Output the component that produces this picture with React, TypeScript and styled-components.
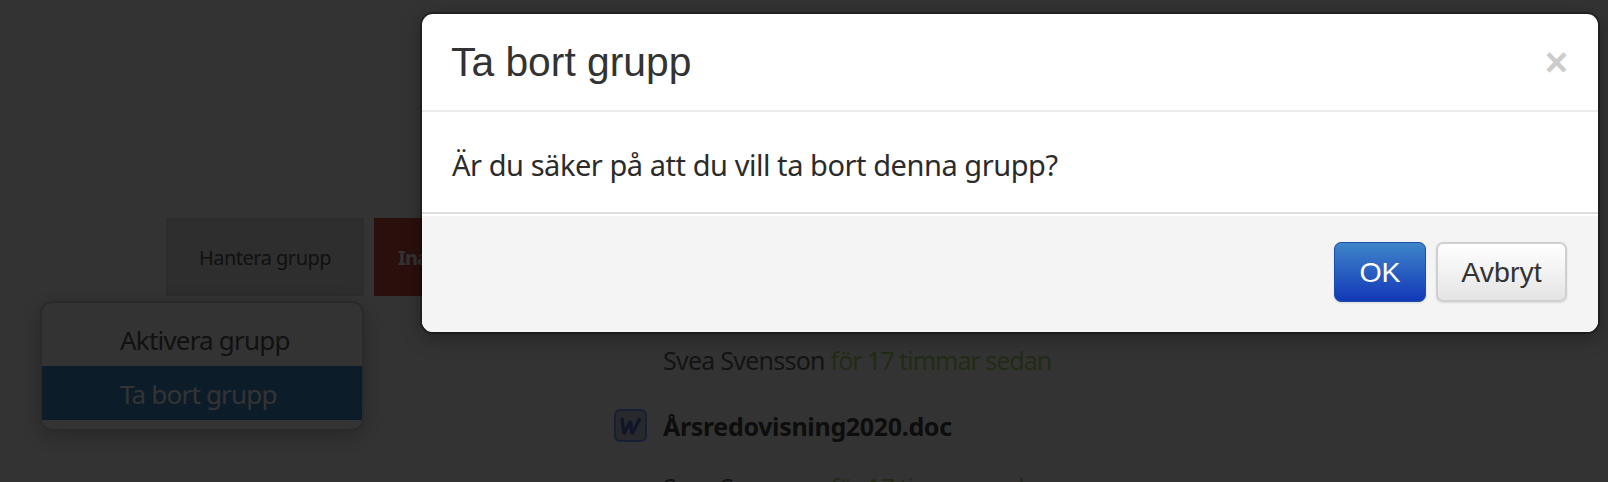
import React from 'react';
import styled, {createGlobalStyle} from 'styled-components';

const GlobalStyle = createGlobalStyle`
    html, body {
        margin: 0;
        padding: 0;
        background: #fff;
    }
`;

const sans = `"Noto Sans", "Open Sans", sans-serif`;
const helvetica = `"Liberation Sans", Arial, sans-serif`;

const WordIcon = () =>
    <svg width="33" height="33" viewBox="0 0 33 33">
        <rect x="1" y="1" width="31" height="31" rx="5" fill="#c4cee0" stroke="#6f9aff" strokeWidth="2" />
        <polyline points="8,9 10,25 16.5,12 18,25 26,9" fill="none" stroke="#4f6fc0" strokeWidth="3.4" strokeLinejoin="bevel" />
    </svg>;

export default function App() {
    return (
        <Page>
            <GlobalStyle />
            <Content>
                <LeftColumn>
                    <ActionRow>
                        <ManageButton>Hantera grupp</ManageButton>
                        <DangerButton>Inaktivera</DangerButton>
                    </ActionRow>
                    <DropMenu>
                        <MenuItem>Aktivera grupp</MenuItem>
                        <MenuItem $active>Ta bort grupp</MenuItem>
                    </DropMenu>
                </LeftColumn>
                <FileColumn>
                    <Uploader>Svea Svensson <Ago>för 17 timmar sedan</Ago></Uploader>
                    <FileRow>
                        <WordIcon />
                        <FileName>Årsredovisning2020.doc</FileName>
                    </FileRow>
                    <Uploader>Svea Svensson <Ago>för 17 timmar sedan</Ago></Uploader>
                </FileColumn>
            </Content>
            <Backdrop />
            <Modal>
                <ModalHeader>
                    <ModalTitle>Ta bort grupp</ModalTitle>
                    <Close>×</Close>
                </ModalHeader>
                <ModalBody>Är du säker på att du vill ta bort denna grupp?</ModalBody>
                <ModalFooter>
                    <PrimaryButton>OK</PrimaryButton>
                    <CancelButton>Avbryt</CancelButton>
                </ModalFooter>
            </Modal>
        </Page>
    );
}

const Page = styled.div`
    position: relative;
    width: 1608px;
    height: 482px;
    overflow: hidden;
    background: #fff;
    font-family: ${sans};
`;

const Content = styled.div`
    display: flex;
    height: 100%;
    padding-top: 218px;
    padding-left: 40px;
    box-sizing: border-box;
`;

const LeftColumn = styled.div`
    width: 526px;
    flex-shrink: 0;
    display: flex;
    flex-direction: column;
`;

const ActionRow = styled.div`
    display: flex;
    gap: 10px;
    margin-left: 126px;
    height: 78px;
`;

const ManageButton = styled.div`
    width: 198px;
    flex-shrink: 0;
    box-sizing: border-box;
    display: flex;
    align-items: center;
    justify-content: center;
    background: #e4e4e4;
    border: 2px solid #dcdcdc;
    color: #555;
    font-size: 20px;
    letter-spacing: -0.5px;
`;

const DangerButton = styled.div`
    width: 200px;
    flex-shrink: 0;
    display: flex;
    align-items: center;
    padding-left: 24px;
    box-sizing: border-box;
    background: #d24b41;
    color: #fff;
    font-size: 20px;
    font-weight: 700;
    letter-spacing: -0.8px;
`;

const DropMenu = styled.div`
    width: 324px;
    height: 130px;
    margin-top: 5px;
    box-sizing: border-box;
    padding-top: 9px;
    background: #fff;
    border: 2px solid #cfcfcf;
    border-radius: 12px;
    box-shadow: 0 6px 24px rgba(0, 0, 0, 0.25);
    overflow: hidden;
`;

const MenuItem = styled.div<{$active?: boolean}>`
    height: 54px;
    line-height: 56px;
    padding-left: 78px;
    font-size: 26px;
    letter-spacing: -0.8px;
    color: ${p => p.$active ? '#fff' : '#555'};
    background: ${p => p.$active ? '#3c8cc8' : 'transparent'};
`;

const FileColumn = styled.div`
    display: flex;
    flex-direction: column;
    padding-left: 48px;
    padding-top: 126px;
    font-size: 25px;
    color: #666;
`;

const Uploader = styled.div`
    height: 32px;
    line-height: 32px;
    margin-left: 49px;
    letter-spacing: -0.75px;
    white-space: nowrap;
`;

const Ago = styled.span`
    color: #a5d86a;
    letter-spacing: -1px;
`;

const FileRow = styled.div`
    display: flex;
    align-items: center;
    gap: 16px;
    height: 33px;
    margin: 33px 0 29px;
`;

const FileName = styled.div`
    font-weight: 700;
    color: #444;
    letter-spacing: -0.34px;
    white-space: nowrap;
`;

const Backdrop = styled.div`
    position: absolute;
    inset: 0;
    background: rgba(0, 0, 0, 0.8);
`;

const Modal = styled.div`
    position: absolute;
    left: 422px;
    top: 14px;
    width: 1176px;
    height: 318px;
    display: flex;
    flex-direction: column;
    background: #fff;
    border-radius: 11px;
    box-shadow: 0 0 0 2px rgba(0, 0, 0, 0.28), 0 5px 20px rgba(0, 0, 0, 0.35);
    overflow: hidden;
`;

const ModalHeader = styled.div`
    height: 98px;
    flex-shrink: 0;
    display: flex;
    align-items: center;
    justify-content: space-between;
    box-sizing: border-box;
    padding: 0 30px;
    border-bottom: 2px solid #ececec;
`;

const ModalTitle = styled.h3`
    margin: 0 0 0 -1px;
    font-family: ${helvetica};
    font-weight: 400;
    font-size: 40.8px;
    color: #333;
`;

const Close = styled.span`
    font-family: ${helvetica};
    font-weight: 700;
    font-size: 40px;
    line-height: 1;
    color: #ccc;
`;

const ModalBody = styled.div`
    height: 100px;
    flex-shrink: 0;
    display: flex;
    align-items: center;
    box-sizing: border-box;
    padding: 4px 30px 0;
    font-size: 29px;
    letter-spacing: -0.45px;
    color: #2b2b2b;
`;

const ModalFooter = styled.div`
    flex: 1;
    display: flex;
    justify-content: flex-end;
    gap: 10px;
    box-sizing: border-box;
    padding: 28px 31px 0 0;
    background: #f4f4f4;
    border-top: 2px solid #ddd;
    box-shadow: inset 0 2px 0 #fff;
`;

const BaseButton = styled.button`
    height: 60px;
    border-radius: 7px;
    font-family: ${helvetica};
    font-size: 28.5px;
    padding: 0;
    box-shadow: 0 1px 2px rgba(0, 0, 0, 0.12);
`;

const PrimaryButton = styled(BaseButton)`
    width: 92px;
    color: #fff;
    background: linear-gradient(#3f85c9, #1238b8);
    border: 1px solid #1c4fa8;
`;

const CancelButton = styled(BaseButton)`
    width: 131px;
    color: #333;
    background: linear-gradient(#fff, #e4e4e4);
    border: 2px solid #cfcfcf;
`;
